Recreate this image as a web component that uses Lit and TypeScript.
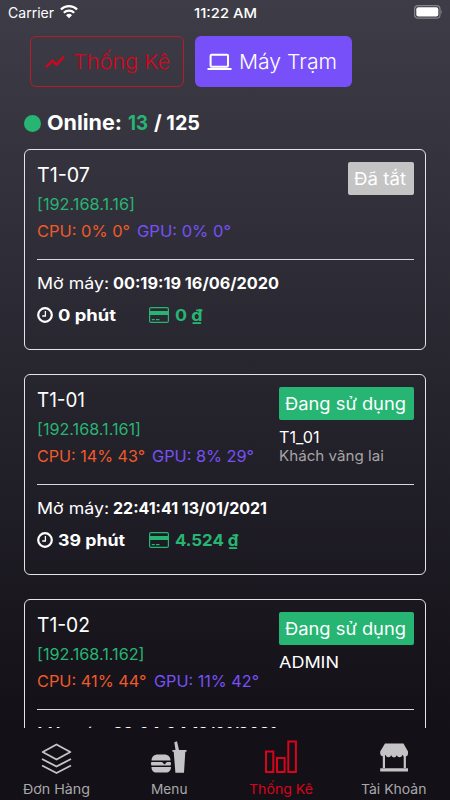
import { LitElement, html, svg, css } from "lit";
import { customElement } from "lit/decorators.js";

interface Run {
  text: string;
  width: number;
}

interface Machine {
  name: Run;
  ip: Run;
  cpu: Run;
  gpu: Run;
  badge: Run;
  off?: boolean;
  user?: Run;
  note?: Run;
  opened: Run;
  minutes: Run;
  money: Run;
}

const machines: Machine[] = [
  {
    name: { text: "T1-07", width: 53 },
    ip: { text: "[192.168.1.16]", width: 98 },
    cpu: { text: "CPU: 0% 0°", width: 93 },
    gpu: { text: "GPU: 0% 0°", width: 94 },
    badge: { text: "Đã tắt", width: 52 },
    off: true,
    opened: { text: "00:19:19 16/06/2020", width: 166 },
    minutes: { text: "0 phút", width: 58 },
    money: { text: "0 ₫", width: 27.5 },
  },
  {
    name: { text: "T1-01", width: 48 },
    ip: { text: "[192.168.1.161]", width: 104 },
    cpu: { text: "CPU: 14% 43°", width: 108 },
    gpu: { text: "GPU: 8% 29°", width: 102 },
    badge: { text: "Đang sử dụng", width: 121 },
    user: { text: "T1_01", width: 40.5 },
    note: { text: "Khách vãng lai", width: 105 },
    opened: { text: "22:41:41 13/01/2021", width: 154 },
    minutes: { text: "39 phút", width: 67 },
    money: { text: "4.524 ₫", width: 63.5 },
  },
  {
    name: { text: "T1-02", width: 53 },
    ip: { text: "[192.168.1.162]", width: 107.5 },
    cpu: { text: "CPU: 41% 44°", width: 109.5 },
    gpu: { text: "GPU: 11% 42°", width: 105 },
    badge: { text: "Đang sử dụng", width: 121 },
    user: { text: "ADMIN", width: 60 },
    opened: { text: "23:04:04 13/01/2021", width: 163.5 },
    minutes: { text: "17 phút", width: 65 },
    money: { text: "1.972 ₫", width: 61 },
  },
];

/** A line of text set to an exact measure, with a fixed baseline. */
const line = (r: Run, cls: string, height: number, baseline: number) => html`
  <svg class="line ${cls}" width=${r.width} height=${height}>
    <text x="0" y=${baseline} textLength=${r.width} lengthAdjust="spacingAndGlyphs">${r.text}</text>
  </svg>
`;

const clock = html`<svg class="icon" width="16" height="16" viewBox="0 0 16 16">
  <circle cx="8" cy="8" r="6.800" fill="none" stroke="#fff" stroke-width="2.200" />
  <path d="M8.400 4v5H5.200" fill="none" stroke="#fff" stroke-width="1.300" />
</svg>`;

const creditCard = html`<svg class="icon" width="20" height="16" viewBox="0 0 20 16">
  <rect x=".6" y=".6" width="18.800" height="14.800" rx="1.500" fill="none" stroke="#27b573" stroke-width="1.200" />
  <path d="M0 4h20v4H0z" fill="#27b573" />
  <path d="M2.800 12.600h3M7 12.600h3.500" stroke="#27b573" stroke-width="1.100" />
</svg>`;

const tabIcons = {
  layers: svg`<g fill="none" stroke="#c4c3c5" stroke-width="1.900" stroke-linejoin="round">
    <path d="M20.500 5.500 34.300 13 20.500 20.500 6.700 13z" />
    <path d="M6 20 20.500 27.500 35 20" />
    <path d="M6 26.500 20.500 34 35 26.500" />
  </g>`,
  food: svg`<g fill="#c4c3c5">
    <path d="M2.500 21.500c0-4 3-6 6-6h7c3 0 6 2 6 6z" />
    <path d="M2.500 23h19q1.200 2 0 3.500h-19q-1.200-2 0-3.500z" />
    <path d="M12.500 22.600h6L15.500 25.500z" fill="#131017" />
    <path d="M2.500 28H22c0 3.500-2 5.600-5 5.600H7.500c-3 0-5-2-5-5.600z" />
    <path d="M26.500 11 25.300 3.200l2.700-1 2 8.800h7.500v1.800h-1.200L35 33.700h-8.600L24.700 12.800h-1.300V11z" />
  </g>`,
  bars: svg`<g fill="none" stroke="#d9031c" stroke-width="2">
    <rect x="5" y="12.500" width="7.300" height="20.500" />
    <rect x="16" y="19" width="7.600" height="14" />
    <rect x="27.300" y="2.500" width="7.600" height="30.500" />
  </g>`,
  store: svg`<g fill="#c4c3c5">
    <path d="M11 4.500h18.500L34 12.500v2.200a2.900 2.900 0 0 1-5.600 1 2.900 2.900 0 0 1-5.600.6 2.900 2.900 0 0 1-5.600 0 2.900 2.900 0 0 1-5.600-.6A2.900 2.900 0 0 1 6.200 14.700v-2.200z" />
    <path d="M8.800 16H11v13H8.800zM29.700 16h2.200v13h-2.200zM6.200 29.200H34v3.300H6.200z" />
  </g>`,
};

const tabs = [
  { icon: tabIcons.layers, label: { text: "Đơn Hàng", width: 67 } },
  { icon: tabIcons.food, label: { text: "Menu", width: 36.5 } },
  { icon: tabIcons.bars, label: { text: "Thống Kê", width: 64 }, active: true },
  { icon: tabIcons.store, label: { text: "Tài Khoản", width: 65.5 } },
];

@customElement("machine-card")
export class MachineCard extends LitElement {
  static properties = { machine: { attribute: false } };
  declare machine: Machine;

  static styles = css`
    :host {
      display: block;
      flex: none;
      box-sizing: border-box;
      height: 201px;
      border: 1px solid #e4e4e6;
      border-radius: 6px;
      padding: 12px 11px 0 12px;
      font-family: Inter, "Noto Sans", sans-serif;
    }
    .line { display: block; overflow: visible; fill: #fff; flex: none; }
    .icon { display: block; flex: none; }
    .top { display: flex; justify-content: space-between; height: 97px; border-bottom: 1px solid #d8d8da; }
    .info { display: flex; flex-direction: column; }
    .loads { display: flex; gap: 7px; }
    .name { font-size: 20.500px; }
    .ip { font-size: 16px; fill: #27b573; }
    .cpu { font-size: 16px; fill: #f15a29; }
    .gpu { font-size: 16px; fill: #7850f8; }
    .side { display: flex; flex-direction: column; }
    .badge { box-sizing: border-box; height: 33px; padding: 0 7.600px 0 6.400px; border-radius: 2px; background: #27b573; }
    .badge.off { background: #c4c4c4; }
    .status { font-size: 17px; }
    .user { font-size: 16px; }
    .note { font-size: 14.500px; fill: #a5a4a7; }
    .row { display: flex; }
    .opened { gap: 4px; height: 34px; }
    .small { font-size: 16px; }
    .bold { font-size: 16px; font-weight: 700; }
    .green { fill: #27b573; }
    .usage { align-items: center; height: 24px; margin-top: 9px; }
    .time { display: flex; align-items: center; gap: 5px; width: 112px; }
    .cost { display: flex; align-items: center; gap: 6px; }
  `;

  render() {
    const m = this.machine;
    return html`
      <div class="top">
        <div class="info">
          ${line(m.name, "name", 31, 20)} ${line(m.ip, "ip", 27, 17)}
          <div class="loads">${line(m.cpu, "cpu", 26, 17)} ${line(m.gpu, "gpu", 26, 17)}</div>
        </div>
        <div class="side">
          <div class="badge ${m.off ? "off" : ""}">${line(m.badge, "status", 33, 23)}</div>
          ${m.user ? line(m.user, "user", 25, 23) : ""} ${m.note ? line(m.note, "note", 20, 16) : ""}
        </div>
      </div>
      <div class="row opened">
        ${line({ text: "Mở máy:", width: 72 }, "small", 34, 29)} ${line(m.opened, "bold", 34, 29)}
      </div>
      <div class="row usage">
        <div class="time">${clock} ${line(m.minutes, "bold", 24, 18)}</div>
        <div class="cost">${creditCard} ${line(m.money, "bold green", 24, 18)}</div>
      </div>
    `;
  }
}

@customElement("app-root")
export class AppRoot extends LitElement {
  static styles = css`
    :host {
      display: flex;
      flex-direction: column;
      width: 450px;
      height: 800px;
      overflow: hidden;
      background: linear-gradient(#3e3d47 0, #35343e 150px, #24222b 420px, #131017 728px);
      font-family: Inter, "Noto Sans", sans-serif;
      color: #fff;
    }
    .line { display: block; overflow: visible; fill: #fff; flex: none; }
    .icon { display: block; flex: none; }
    .statusbar { display: grid; grid-template-columns: 1fr auto 1fr; height: 24px; padding: 0 7px 0 8px; }
    .carrier { display: flex; gap: 6px; }
    .battery { justify-self: end; }
    .carrier-name { font-size: 14px; }
    .clock { font-size: 13.500px; font-weight: 500; }
    .switch { display: flex; gap: 11px; margin: 12px 0 0 30px; }
    .button { box-sizing: border-box; display: flex; height: 51px; border-radius: 6px; align-items: center; }
    .stats { width: 154px; border: 1px solid #b81c2c; padding-left: 14px; gap: 8px; }
    .stations { width: 157px; background: #7850fa; padding-left: 12px; gap: 7px; }
    .tablabel { font-size: 20.500px; font-weight: 300; }
    .red { fill: #d9031c; }
    .online { display: flex; align-items: center; height: 26px; margin: 23px 0 0 24px; }
    .dot { width: 17px; height: 17px; border-radius: 50%; background: #27b573; margin-right: 6px; }
    .count { font-size: 20.500px; font-weight: 700; margin-right: 6px; }
    .green { fill: #27b573; }
    .list { display: flex; flex-direction: column; gap: 24px; flex: 1; min-height: 0; overflow: hidden; padding: 13px 24px 0; }
    .tabbar { display: grid; grid-template-columns: repeat(4, 1fr); height: 72px; background: #131017; flex: none; }
    .tab { display: flex; flex-direction: column; align-items: center; padding-top: 11px; }
    .tabtext { font-size: 13.500px; fill: #a9a8aa; font-family: Inter, sans-serif; }
    .active { fill: #d9031c; }
  `;

  render() {
    return html`
      <div class="statusbar">
        <div class="carrier">
          ${line({ text: "Carrier", width: 46 }, "carrier-name", 24, 17.5)}
          <svg class="icon" width="18" height="24" viewBox="0 0 18 24">
            <g fill="none" stroke="#fff" stroke-width="2.200">
              <path d="M.9 9.500a11.500 11.500 0 0 1 16.200 0" />
              <path d="M3.800 12.700a7.400 7.400 0 0 1 10.400 0" />
            </g>
            <path d="M6 15.200a4.300 4.300 0 0 1 6 0L9 18.300z" fill="#fff" />
          </svg>
        </div>
        ${line({ text: "11:22 AM", width: 63 }, "clock", 24, 17.5)}
        <svg class="icon battery" width="29" height="24" viewBox="0 0 29 24">
          <rect x=".6" y="5.600" width="25.400" height="12.600" rx="3.500" fill="none" stroke="#85848b" stroke-width="1.200" />
          <rect x="2.300" y="7.200" width="22" height="9.400" rx="2" fill="#fff" />
          <path d="M27.200 9.800q1.700 2 0 4.200z" fill="#85848b" />
        </svg>
      </div>

      <div class="switch">
        <div class="button stats">
          <svg class="icon" width="20" height="14" viewBox="0 0 20 14">
            <path d="M1 12.300 7.500 5.800 11.500 9.800 19 1.400" fill="none" stroke="#d9031c" stroke-width="2.300" />
          </svg>
          ${line({ text: "Thống Kê", width: 97 }, "tablabel red", 49, 32)}
        </div>
        <div class="button stations">
          <svg class="icon" width="25" height="18" viewBox="0 0 25 18">
            <rect x="3.600" y="1.800" width="17.400" height="12" rx="1" fill="none" stroke="#fff" stroke-width="2" />
            <path d="M.5 15h24v2H.5z" fill="#fff" />
          </svg>
          ${line({ text: "Máy Trạm", width: 98 }, "tablabel", 51, 33)}
        </div>
      </div>

      <div class="online">
        <span class="dot"></span>
        ${line({ text: "Online:", width: 75 }, "count", 26, 20)}
        ${line({ text: "13", width: 20 }, "count green", 26, 20)}
        ${line({ text: "/ 125", width: 46 }, "count", 26, 20)}
      </div>

      <div class="list">${machines.map((m) => html`<machine-card .machine=${m}></machine-card>`)}</div>

      <div class="tabbar">
        ${tabs.map(
          (t) => html`<div class="tab">
            <svg class="icon" width="40" height="38" viewBox="0 0 40 38">${t.icon}</svg>
            ${line(t.label, t.active ? "tabtext active" : "tabtext", 20, 17)}
          </div>`
        )}
      </div>
    `;
  }
}
